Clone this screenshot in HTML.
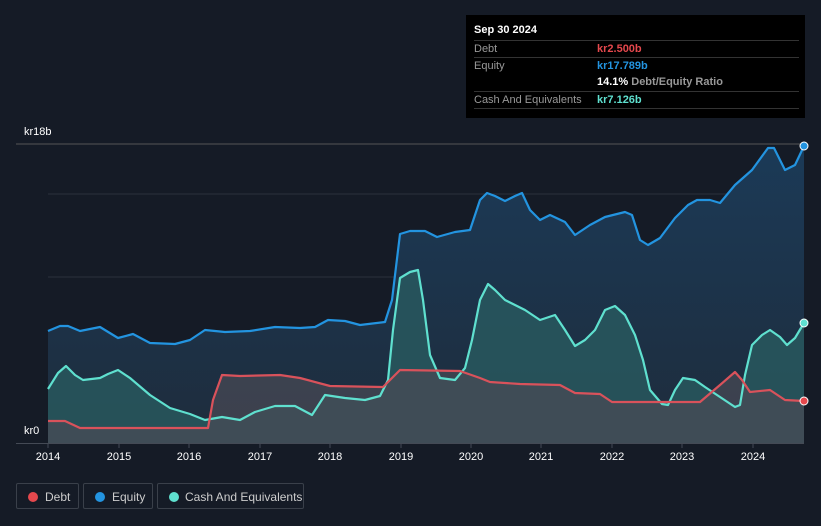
<!DOCTYPE html><html><head><style>
body{margin:0;width:821px;height:526px;background:#151b26;font-family:"Liberation Sans",sans-serif;overflow:hidden;position:relative;color:#fff}
.tt{position:absolute;left:466px;top:15px;width:339px;height:103px;background:#000;font-size:11px}
.r{position:absolute;left:8px;right:6px;border-top:1px solid #333;height:17px;line-height:17px;color:#999}
.r span{position:absolute;left:123px;font-weight:bold}
.ax{position:absolute;font-size:11px;color:#fff}
.lg{position:absolute;top:483px;height:26px;border:1px solid #3a404a;border-radius:2px;font-size:12px;color:#ccc;line-height:26px;box-sizing:border-box;white-space:nowrap}
.lg i{position:absolute;left:11px;top:8px;width:10px;height:10px;border-radius:50%}
</style></head><body>
<div class="tt">
<div style="position:absolute;left:8px;top:9px;font-weight:bold;font-size:11px">Sep 30 2024</div>
<div class="r" style="top:25px">Debt<span style="color:#e5484d">kr2.500b</span></div>
<div class="r" style="top:42px">Equity<span style="color:#2394e0">kr17.789b</span></div>
<div class="r" style="top:59px;border:0"><span style="color:#fff">14.1% <b style="color:#999">Debt/Equity Ratio</b></span></div>
<div class="r" style="top:76px">Cash And Equivalents<span style="color:#5fe0cf">kr7.126b</span></div>
<div class="r" style="top:93px;height:0"></div>
</div>
<div class="ax" style="left:24px;top:126px">kr18b</div>
<div class="ax" style="left:24px;top:425px">kr0</div>
<svg width="821" height="526" style="position:absolute;left:0;top:0">
<defs><linearGradient id="g" x1="0" y1="0" x2="0" y2="1"><stop offset="0" stop-color="#1b3a57"/><stop offset="1" stop-color="#1e2c3c"/></linearGradient></defs>
<g stroke="#2a313c" stroke-width="1"><line x1="16" y1="144" x2="804" y2="144" stroke="#555"/><line x1="48" y1="194" x2="804" y2="194"/><line x1="48" y1="277" x2="804" y2="277"/><line x1="48" y1="360" x2="804" y2="360"/></g>
<path fill="url(#g)" d="M48,331 L60,326 68,326 80,331 100,327 118,338 133,334 150,343 175,344 190,340 205,330 225,332 250,331 275,327 300,328 315,327 328,320 345,321 360,325 385,322 392,300 400,234 410,231 425,231 437,237 455,232 470,230 480,200 487,193 495,196 505,201 515,196 522,193 530,210 540,220 550,215 565,222 575,235 590,225 605,217 625,212 632,215 640,240 648,245 660,238 675,218 688,205 697,200 710,200 720,203 735,185 752,170 768,148 774,148 785,170 795,165 804,146 L804,443 48,443Z"/>
<path fill="#2a5d62" fill-opacity="0.75" d="M48,389 L58,373 66,366 75,375 83,380 100,378 108,374 118,370 130,378 150,395 170,408 190,414 205,420 222,417 240,420 255,412 275,406 295,406 312,415 325,395 345,398 365,400 380,396 388,380 393,330 400,278 410,272 418,270 423,300 430,355 440,378 455,380 465,368 472,340 480,300 488,284 495,290 505,300 525,310 540,320 555,315 565,330 575,346 585,340 595,330 605,310 615,306 625,315 635,335 643,360 650,390 662,404 668,405 675,390 683,378 695,380 705,387 720,397 735,407 740,405 745,375 752,345 762,335 770,330 780,337 787,345 795,338 804,323 L804,443 48,443Z"/>
<path fill="#4a4a55" fill-opacity="0.7" d="M48,421 L65,421 80,428 100,428 150,428 208,428 213,400 222,375 240,376 280,375 300,378 330,386 383,387 387,383 400,370 460,371 480,378 490,382 520,384 560,385 575,393 600,394 612,402 680,402 700,402 720,385 735,372 742,380 750,392 770,390 785,400 804,401 L804,443 48,443Z"/>
<g fill="none" stroke-width="2.2" stroke-linejoin="round">
<path stroke="#2394e0" d="M48,331 L60,326 68,326 80,331 100,327 118,338 133,334 150,343 175,344 190,340 205,330 225,332 250,331 275,327 300,328 315,327 328,320 345,321 360,325 385,322 392,300 400,234 410,231 425,231 437,237 455,232 470,230 480,200 487,193 495,196 505,201 515,196 522,193 530,210 540,220 550,215 565,222 575,235 590,225 605,217 625,212 632,215 640,240 648,245 660,238 675,218 688,205 697,200 710,200 720,203 735,185 752,170 768,148 774,148 785,170 795,165 804,146"/>
<path stroke="#5fe0cf" d="M48,389 L58,373 66,366 75,375 83,380 100,378 108,374 118,370 130,378 150,395 170,408 190,414 205,420 222,417 240,420 255,412 275,406 295,406 312,415 325,395 345,398 365,400 380,396 388,380 393,330 400,278 410,272 418,270 423,300 430,355 440,378 455,380 465,368 472,340 480,300 488,284 495,290 505,300 525,310 540,320 555,315 565,330 575,346 585,340 595,330 605,310 615,306 625,315 635,335 643,360 650,390 662,404 668,405 675,390 683,378 695,380 705,387 720,397 735,407 740,405 745,375 752,345 762,335 770,330 780,337 787,345 795,338 804,323"/>
<path stroke="#d9525b" d="M48,421 L65,421 80,428 100,428 150,428 208,428 213,400 222,375 240,376 280,375 300,378 330,386 383,387 387,383 400,370 460,371 480,378 490,382 520,384 560,385 575,393 600,394 612,402 680,402 700,402 720,385 735,372 742,380 750,392 770,390 785,400 804,401"/>
</g>
<circle cx="804" cy="146" r="4" fill="#2394e0" stroke="#fff" stroke-width="1"/>
<circle cx="804" cy="323" r="4" fill="#5fe0cf" stroke="#fff" stroke-width="1"/>
<circle cx="804" cy="401" r="4" fill="#e5484d" stroke="#fff" stroke-width="1"/>
<line x1="16" y1="443.5" x2="804" y2="443.5" stroke="#444a55"/>
<g stroke="#444a55"><line x1="48" y1="443" x2="48" y2="448"/><line x1="119" y1="443" x2="119" y2="448"/><line x1="189" y1="443" x2="189" y2="448"/><line x1="260" y1="443" x2="260" y2="448"/><line x1="330" y1="443" x2="330" y2="448"/><line x1="401" y1="443" x2="401" y2="448"/><line x1="471" y1="443" x2="471" y2="448"/><line x1="541" y1="443" x2="541" y2="448"/><line x1="612" y1="443" x2="612" y2="448"/><line x1="682" y1="443" x2="682" y2="448"/><line x1="753" y1="443" x2="753" y2="448"/></g>
<g fill="#fff" font-size="11" text-anchor="middle" font-family="Liberation Sans"><text x="48" y="460">2014</text><text x="119" y="460">2015</text><text x="189" y="460">2016</text><text x="260" y="460">2017</text><text x="330" y="460">2018</text><text x="401" y="460">2019</text><text x="471" y="460">2020</text><text x="541" y="460">2021</text><text x="612" y="460">2022</text><text x="682" y="460">2023</text><text x="753" y="460">2024</text></g>
</svg>
<div class="lg" style="left:16px;width:63px"><i style="background:#e5484d"></i><span style="position:absolute;left:28px">Debt</span></div>
<div class="lg" style="left:83px;width:70px"><i style="background:#2394e0"></i><span style="position:absolute;left:28px">Equity</span></div>
<div class="lg" style="left:157px;width:147px"><i style="background:#5fe0cf"></i><span style="position:absolute;left:27px">Cash And Equivalents</span></div>
</body></html>
